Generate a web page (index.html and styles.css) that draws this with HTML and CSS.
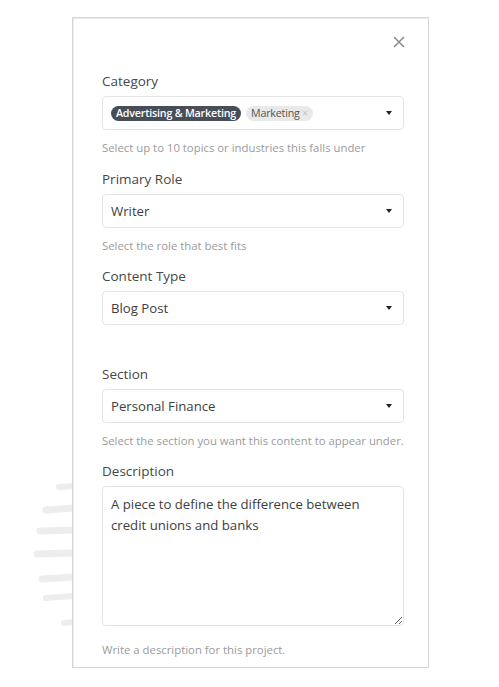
FILE: index.html
```html
<!DOCTYPE html>
<html>
<head>
<meta charset="utf-8">
<link rel="stylesheet" href="styles.css">
</head>
<body>
<svg class="strokes" width="40" height="160" viewBox="0 0 40 160">
  <g stroke="#ededed" stroke-linecap="round" fill="none">
    <path d="M25 16 L40 15" stroke-width="6"/>
    <path d="M12 39 L40 37" stroke-width="7"/>
    <path d="M6 60 L40 59" stroke-width="7"/>
    <path d="M3 83 L40 82" stroke-width="7"/>
    <path d="M8 108 L40 106" stroke-width="7"/>
    <path d="M12 127 L40 125" stroke-width="6"/>
    <path d="M30 152 L40 151" stroke-width="6"/>
  </g>
</svg>
<div class="panel">
  <div class="close-row">
    <svg class="close" width="12" height="12" viewBox="0 0 12 12"><path d="M1 1 L11 11 M11 1 L1 11" stroke="#8a8a8a" stroke-width="1.5" fill="none"/></svg>
  </div>

  <div class="field">
    <div class="label">Category</div>
    <div class="select">
      <div class="chips">
        <span class="chip chip-dark">Advertising &amp; Marketing</span>
        <span class="chip chip-light">Marketing <span class="chip-x">×</span></span>
      </div>
      <span class="caret"></span>
    </div>
    <div class="help">Select up to 10 topics or industries this falls under</div>
  </div>

  <div class="field">
    <div class="label">Primary Role</div>
    <div class="select"><span class="value">Writer</span><span class="caret"></span></div>
    <div class="help">Select the role that best fits</div>
  </div>

  <div class="field">
    <div class="label">Content Type</div>
    <div class="select"><span class="value">Blog Post</span><span class="caret"></span></div>
    <div class="help">&nbsp;</div>
  </div>

  <div class="field">
    <div class="label">Section</div>
    <div class="select"><span class="value">Personal Finance</span><span class="caret"></span></div>
    <div class="help">Select the section you want this content to appear under.</div>
  </div>

  <div class="field">
    <div class="label">Description</div>
    <textarea class="textarea">A piece to define the difference between credit unions and banks</textarea>
    <div class="help">Write a description for this project.</div>
  </div>
</div>
</body>
</html>
```
FILE: styles.css
```css
html, body {
  margin: 0;
  background: #ffffff;
}
body {
  padding: 17px 0 0 72px;
  font-family: "Open Sans", "Liberation Sans", sans-serif;
  position: relative;
}
.strokes {
  position: absolute;
  left: 34px;
  top: 471px;
}
.panel {
  position: relative;
  box-sizing: border-box;
  width: 357px;
  height: 651px;
  border: 1px solid #d6d6d6;
  box-shadow: inset 1px 1px 0 #ececec;
  background: #fff;
  padding: 0 24px 0 29px;
}
.close-row {
  display: flex;
  justify-content: flex-end;
  padding: 18px 0 0 0;
  height: 12px;
  margin-right: -1px;
}
.close { display: block; }
.field {
  display: flex;
  flex-direction: column;
}
.field + .field { margin-top: 11.6px; }
.close-row + .field { margin-top: 23px; }
.label {
  font-size: 13.5px;
  line-height: 20px;
  color: #474747;
  margin-bottom: 5px;
}
.select {
  box-sizing: border-box;
  height: 34px;
  border: 1px solid #e4e4e4;
  border-radius: 4px;
  display: flex;
  align-items: center;
  justify-content: space-between;
  padding: 0 11px 0 8px;
}
.value {
  font-size: 13.2px;
  color: #3e3e3e;
}
.caret {
  width: 0;
  height: 0;
  border-left: 3.5px solid transparent;
  border-right: 3.5px solid transparent;
  border-top: 4px solid #222;
}
.chips {
  display: flex;
  gap: 5px;
}
.chip {
  font-size: 10.7px;
  line-height: 15px;
  height: 15px;
  border-radius: 8px;
  padding: 0 5px;
  letter-spacing: -0.2px;
}
.chip-dark {
  background: #474e57;
  color: #fff;
  font-weight: 600;
}
.chip-light {
  background: #e9e9e9;
  color: #555;
}
.chip-x {
  color: #c4c4c4;
  font-size: 10px;
}
.help {
  font-size: 11.35px;
  line-height: 18px;
  color: #9b9b9b;
  margin-top: 9px;
}
.textarea {
  box-sizing: border-box;
  height: 140px;
  border: 1px solid #e4e4e4;
  border-radius: 4px;
  padding: 7px 8px;
  font-family: "Open Sans", "Liberation Sans", sans-serif;
  font-size: 13.2px;
  line-height: 21px;
  color: #3e3e3e;
  resize: vertical;
  margin: 0;
  outline: none;
}
.field:last-child .help { margin-top: 15px; }
```
